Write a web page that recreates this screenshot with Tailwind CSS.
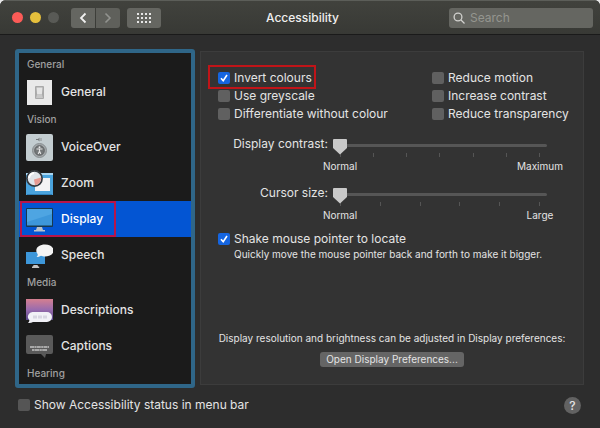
<!DOCTYPE html>
<html lang="en-GB">
<head>
  <meta charset="UTF-8" />
  <meta name="viewport" content="width=device-width, initial-scale=1.0"/>
  <title>Accessibility</title>
  <script src="https://cdn.jsdelivr.net/npm/@tailwindcss/browser@4"></script>
</head>
<body class="bg-[#e8e8e8] font-['Inter','Liberation_Sans',sans-serif] text-[#e4e4e4]">

  <div class="flex min-h-screen flex-col overflow-hidden rounded-t-md bg-[#2d2d2d]">

    <!-- title bar -->
    <header class="grid h-[35px] shrink-0 grid-cols-3 items-center border-t border-b border-t-[#5c5e59] border-b-[#1a1a1a] bg-linear-to-b from-[#41423d] to-[#383935] pl-3 pr-[7px]">
      <div class="flex items-center">
        <span class="size-[11px] rounded-full bg-[#fc5b57]"></span>
        <span class="ml-[7px] size-[11px] rounded-full bg-[#e5bf3c]"></span>
        <span class="ml-[7px] size-[11px] rounded-full bg-[#595a56]"></span>
        <button aria-label="Back" class="ml-3 flex h-5 w-6 items-center justify-center rounded-l-[3px] bg-[#656661]">
          <svg class="h-3 w-2" viewBox="0 0 8 12" fill="none" stroke="#f0f0f0" stroke-width="1.8"><path d="M6.5 1.5 2 6l4.500 4.500"/></svg>
        </button>
        <button aria-label="Forward" class="ml-px flex h-5 w-6 items-center justify-center rounded-r-[3px] bg-[#5f605b]">
          <svg class="h-3 w-2" viewBox="0 0 8 12" fill="none" stroke="#92938f" stroke-width="1.6"><path d="M1.500 1.500 6 6 1.500 10.500"/></svg>
        </button>
        <button aria-label="Show all" class="ml-[7px] flex h-5 w-[34px] items-center justify-center rounded-[3px] bg-[#656661]">
          <svg class="h-[10px] w-[14px]" viewBox="0 0 14 10" fill="#e6e6e6">
            <path d="M0 0h2v2H0zM4 0h2v2H4zM8 0h2v2H8zM12 0h2v2h-2zM0 4h2v2H0zM4 4h2v2H4zM8 4h2v2H8zM12 4h2v2h-2zM0 8h2v2H0zM4 8h2v2H4zM8 8h2v2H8zM12 8h2v2h-2z"/>
          </svg>
        </button>
      </div>
      <h1 class="text-center text-xs font-medium text-[#efefef]">Accessibility</h1>
      <div class="relative w-36 justify-self-end">
        <svg class="absolute top-1 left-1 size-3" viewBox="0 0 12 12" fill="none" stroke="#d2d2cf" stroke-width="1.300"><circle cx="5" cy="5" r="3.900"/><path d="m8 8 3.500 3.500"/></svg>
        <input type="search" aria-label="Search" placeholder="Search" class="block h-5 w-full rounded-[3px] bg-[#656661] pl-[21px] text-xs placeholder:text-[#94958f]" />
      </div>
    </header>

    <main class="flex flex-1 pt-[14px] pr-4 pl-[15px]">

      <!-- categories -->
      <nav class="w-[30%] min-w-[180px] shrink-0 rounded-[3px] border-4 border-[#2f6688] bg-[#1b1b1b] pt-[2px] pb-px text-xs font-medium">
        <h2 class="h-[19px] pl-2 text-[10px] leading-[18px] font-medium text-[#a0a0a0]">General</h2>
        <a href="#general" class="flex h-9 items-center gap-2 pl-[7px]">
          <svg class="size-[27px]" viewBox="0 0 27 27">
            <rect x="1" y="1" width="25" height="25" fill="#e9e9e9"/>
            <rect x="9" y="7" width="9" height="13" rx="1" fill="#a9a9a9"/>
            <path d="M10.500 8.500h6l-.6 7h-4.800z" fill="#e4e4e4"/><path d="M11 15.500h5l1 3.500h-7z" fill="#c8c8c8"/>
          </svg>
          General
        </a>

        <h2 class="h-[19px] pl-2 text-[10px] leading-[18px] font-medium text-[#a0a0a0]">Vision</h2>
        <a href="#voiceover" class="flex h-9 items-center gap-2 pl-[7px]">
          <svg class="size-[27px]" viewBox="0 0 27 27">
            <rect width="27" height="27" rx="2" fill="#c3cdd0"/>
            <path d="M10 5h2l1.500-1.500v4L12 6h-2z" fill="#75797b"/><path d="M15 4v3" stroke="#8b9092"/>
            <circle cx="13.500" cy="16.500" r="7" fill="#a3a8aa" stroke="#8a9092"/>
            <circle cx="13.500" cy="16.500" r="4.800" fill="#747879" stroke="#5f6364"/>
            <circle cx="13.500" cy="13.300" r="1" fill="#e5e5e5"/>
            <path d="M10.500 15h6M13.500 15v3M13.500 17l-1.300 3M13.500 17l1.300 3" stroke="#e5e5e5" stroke-width="1.100"/>
          </svg>
          VoiceOver
        </a>
        <a href="#zoom" class="flex h-9 items-center gap-2 pl-[7px]">
          <svg class="size-[27px]" viewBox="0 0 27 27">
            <rect y="3" width="27" height="22" fill="#4aa3dd"/>
            <path d="M0 3h27v2H0z" fill="#a8d5f1"/>
            <path d="M12 8h12v13H9v-5z" fill="#f3f3f5"/>
            <path d="M1 25h25v-1H1z" fill="#2e7fb8"/>
            <circle cx="8.500" cy="8.500" r="7.600" fill="#dfe4ea" stroke="#34393f" stroke-width="1.700"/>
            <path d="M8 9.500 15 7.500a6.700 6.700 0 0 1-6 7.700z" fill="#e79a92"/>
            <path d="M3 8a6 6 0 0 1 5-5" stroke="#fff" stroke-width="2" fill="none"/>
          </svg>
          Zoom
        </a>
        <a href="#display" aria-current="page" class="relative flex h-9 items-center gap-2 bg-[#0355d3] pl-[7px] text-white">
          <svg class="size-[27px]" viewBox="0 0 27 27">
            <rect y="2" width="27" height="19" rx="1" fill="#17384f"/>
            <rect x="1" y="3" width="25" height="16.500" fill="#3d97da"/><path d="M1 3h25v5L1 16z" fill="#4ea5e2"/>
            <path d="M11 21h5l1 3h2v1.500H8V24h2z" fill="#b9c2ca"/>
          </svg>
          Display
          <span class="pointer-events-none absolute inset-y-0 left-px w-24 border-2 border-[#b8154a]"></span>
        </a>
        <a href="#speech" class="flex h-9 items-center gap-2 pl-[7px]">
          <svg class="size-[27px]" viewBox="0 0 27 27">
            <rect y="10" width="19" height="12" fill="#3d97da"/>
            <path d="M7.500 23h4l.7 1.500h1V26H6v-1.500h1z" fill="#c5c5c5"/>
            <path d="M19 2.500c5 0 8.500 2.500 8.500 6s-3.500 6-8.500 6c-1.500 0-3-.2-4-.7-1.500.9-3.500 1.300-4.500 1.200 1-.8 1.300-1.700 1.200-3C10.700 11 10.300 9.800 10.300 8.500c0-3.500 3.700-6 8.700-6z" fill="#f4f4f4"/>
          </svg>
          Speech
        </a>

        <h2 class="h-[19px] pl-2 text-[10px] leading-[18px] font-medium text-[#a0a0a0]">Media</h2>
        <a href="#descriptions" class="flex h-9 items-center gap-2 pl-[7px]">
          <svg class="size-[27px]" viewBox="0 0 27 27">
            <defs><linearGradient id="sunset" x2="0" y2="1"><stop stop-color="#d57f90"/><stop offset=".5" stop-color="#9a6cae"/><stop offset="1" stop-color="#574686"/></linearGradient></defs>
            <rect y="2" width="27" height="21" fill="url(#sunset)"/>
            <path d="M7 15h14a4.500 4.500 0 0 1 0 10H7c-1.500 1-3.500 1.300-5 1 1-.8 1.500-2 1.300-3A4.700 4.700 0 0 1 7 15z" fill="#f1f0f6"/>
            <path d="M7 20h14" stroke="#d8d5e2" stroke-width="3" stroke-dasharray="4 1"/>
          </svg>
          Descriptions
        </a>
        <a href="#captions" class="flex h-9 items-center gap-2 pl-[7px]">
          <svg class="size-[27px]" viewBox="0 0 27 27">
            <path d="M2 2h23a2 2 0 0 1 2 2v15a2 2 0 0 1-2 2h-5l-1 4-4-4H2a2 2 0 0 1-2-2V4a2 2 0 0 1 2-2z" fill="#5a5a5a"/>
            <path d="M4 14h19" stroke="#c4c4c4" stroke-width="1.300" stroke-dasharray="4 .4 2 .4"/><path d="M6 17h15" stroke="#c4c4c4" stroke-width="1.300" stroke-dasharray="2 .4 5 .4"/>
          </svg>
          Captions
        </a>

        <h2 class="h-[19px] pl-2 text-[10px] leading-[18px] font-medium text-[#a0a0a0]">Hearing</h2>
      </nav>

      <!-- display settings -->
      <section class="mt-[2px] mb-[3px] ml-[5px] flex min-w-0 flex-1 flex-col border border-[#3c3c3c] bg-[#333333] px-[17px] pt-[17px] text-xs">
        <div class="grid grid-cols-[214px_auto] justify-start whitespace-nowrap">
          <label class="relative flex h-[18px] items-center gap-1">
            <input type="checkbox" checked class="peer size-3 appearance-none rounded-xs bg-[#606060] checked:bg-[#1565e0]" />
            <svg class="absolute left-0 hidden size-3 peer-checked:block" viewBox="0 0 12 12" fill="none" stroke="#fff" stroke-width="1.600"><path d="m3 6.300 2.200 2.500L9 3"/></svg>
            Invert colours
            <span class="pointer-events-none absolute -top-1 -bottom-[2px] -left-[10px] z-10 w-[108px] border-2 border-[#c01418]"></span>
          </label>
          <label class="flex h-[18px] items-center gap-1">
            <input type="checkbox" class="size-3 appearance-none rounded-xs bg-[#606060] checked:bg-[#1565e0]" />
            Reduce motion
          </label>
          <label class="flex h-[18px] items-center gap-1">
            <input type="checkbox" class="size-3 appearance-none rounded-xs bg-[#606060] checked:bg-[#1565e0]" />
            Use greyscale
          </label>
          <label class="flex h-[18px] items-center gap-1">
            <input type="checkbox" class="size-3 appearance-none rounded-xs bg-[#606060] checked:bg-[#1565e0]" />
            Increase contrast
          </label>
          <label class="flex h-[18px] items-center gap-1">
            <input type="checkbox" class="size-3 appearance-none rounded-xs bg-[#606060] checked:bg-[#1565e0]" />
            Differentiate without colour
          </label>
          <label class="flex h-[18px] items-center gap-1">
            <input type="checkbox" class="size-3 appearance-none rounded-xs bg-[#606060] checked:bg-[#1565e0]" />
            Reduce transparency
          </label>
        </div>

        <div class="mt-3 grid grid-cols-[110px_214px] gap-x-[5px]">
          <label for="contrast" class="h-[49px] text-right leading-[18px] whitespace-nowrap">Display contrast:</label>
          <div class="h-[49px]">
            <div class="relative h-[22px]">
              <div class="absolute inset-x-[7px] bottom-0 flex h-1 justify-between">
                <i class="w-px bg-[#555555]"></i><i class="w-px bg-[#555555]"></i><i class="w-px bg-[#555555]"></i><i class="w-px bg-[#555555]"></i><i class="w-px bg-[#555555]"></i><i class="w-px bg-[#555555]"></i><i class="w-px bg-[#555555]"></i>
              </div>
              <input id="contrast" type="range" min="0" max="6" value="0" class="relative block h-5 w-full appearance-none bg-transparent [&::-webkit-slider-runnable-track]:h-[3px] [&::-webkit-slider-runnable-track]:rounded-full [&::-webkit-slider-runnable-track]:bg-[#565656] [&::-webkit-slider-thumb]:-mt-[5px] [&::-webkit-slider-thumb]:h-4 [&::-webkit-slider-thumb]:w-[14px] [&::-webkit-slider-thumb]:appearance-none [&::-webkit-slider-thumb]:bg-[#c9c9c9] [&::-webkit-slider-thumb]:[clip-path:polygon(7%_0,93%_0,100%_7%,100%_60%,50%_100%,0_60%,0_7%)]" />
            </div>
            <div class="-mx-4 flex justify-between text-[10px] leading-[18px]">
              <span class="w-[46px] text-center">Normal</span>
              <span class="w-[46px] text-center">Maximum</span>
            </div>
          </div>

          <label for="cursor" class="h-[46px] text-right leading-[18px] whitespace-nowrap">Cursor size:</label>
          <div class="h-[46px]">
            <div class="relative h-[22px]">
              <div class="absolute inset-x-[7px] bottom-0 flex h-1 justify-between">
                <i class="w-px bg-[#555555]"></i><i class="w-px bg-[#555555]"></i><i class="w-px bg-[#555555]"></i><i class="w-px bg-[#555555]"></i><i class="w-px bg-[#555555]"></i><i class="w-px bg-[#555555]"></i>
              </div>
              <input id="cursor" type="range" min="0" max="5" value="0" class="relative block h-5 w-full appearance-none bg-transparent [&::-webkit-slider-runnable-track]:h-[3px] [&::-webkit-slider-runnable-track]:rounded-full [&::-webkit-slider-runnable-track]:bg-[#565656] [&::-webkit-slider-thumb]:-mt-[5px] [&::-webkit-slider-thumb]:h-4 [&::-webkit-slider-thumb]:w-[14px] [&::-webkit-slider-thumb]:appearance-none [&::-webkit-slider-thumb]:bg-[#c9c9c9] [&::-webkit-slider-thumb]:[clip-path:polygon(7%_0,93%_0,100%_7%,100%_60%,50%_100%,0_60%,0_7%)]" />
            </div>
            <div class="-mx-4 flex justify-between text-[10px] leading-[18px]">
              <span class="w-[46px] text-center">Normal</span>
              <span class="w-[46px] text-center">Large</span>
            </div>
          </div>
        </div>

        <label class="relative flex h-[18px] items-center gap-1">
          <input type="checkbox" checked class="peer size-3 appearance-none rounded-xs bg-[#606060] checked:bg-[#1565e0]" />
          <svg class="absolute left-0 hidden size-3 peer-checked:block" viewBox="0 0 12 12" fill="none" stroke="#fff" stroke-width="1.600"><path d="m3 6.300 2.200 2.500L9 3"/></svg>
          Shake mouse pointer to locate
        </label>
        <p class="pl-4 text-[10px] leading-3 whitespace-nowrap">Quickly move the mouse pointer back and forth to make it bigger.</p>

        <div class="mt-auto flex flex-col items-center pb-[17px]">
          <p class="text-[10px] leading-4 whitespace-nowrap">Display resolution and brightness can be adjusted in Display preferences:</p>
          <button class="mt-[6px] h-[15px] w-36 rounded-[3px] bg-[#656565] text-[10px] leading-[15px] whitespace-nowrap">Open Display Preferences...</button>
        </div>
      </section>
    </main>

    <footer class="flex h-10 shrink-0 items-center justify-between pr-[19px] pb-[6px] pl-[18px] text-xs">
      <label class="flex items-center gap-1">
        <input type="checkbox" class="size-3 appearance-none rounded-xs bg-[#555555] checked:bg-[#1565e0]" />
        Show Accessibility status in menu bar
      </label>
      <button aria-label="Help" class="size-[17px] rounded-full bg-[#626262] text-xs leading-[17px] font-medium">?</button>
    </footer>
  </div>

</body>
</html>
